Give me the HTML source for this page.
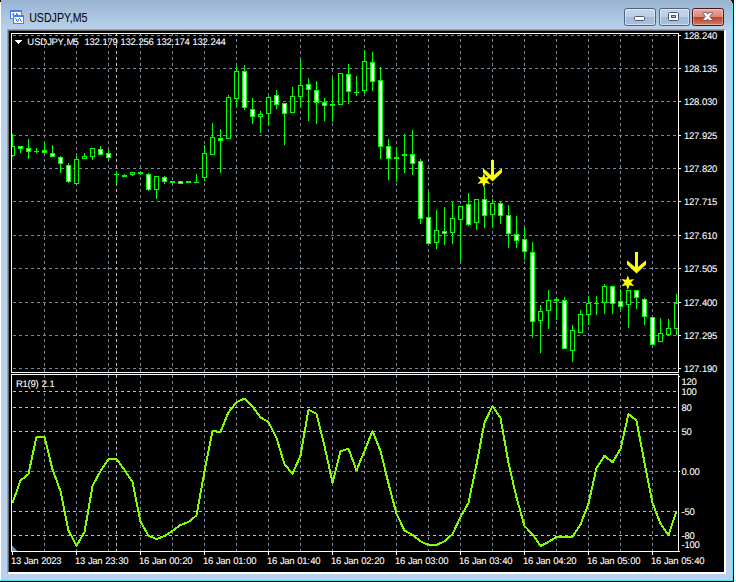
<!DOCTYPE html>
<html><head><meta charset="utf-8"><title>USDJPY,M5</title>
<style>
html,body{margin:0;padding:0;background:#fff;}
body{width:736px;height:582px;position:relative;overflow:hidden;font-family:"Liberation Sans",sans-serif;}
#win{position:absolute;left:0;top:0;width:734px;height:582px;background:#000;}
#frame{position:absolute;left:1px;top:0;width:731px;height:580px;background:linear-gradient(to bottom,#99b4d1 0px,#b9d1ea 29px,#b9d1ea 100%);}
#lwhite{position:absolute;left:0;top:2px;width:1px;height:578px;background:#fff;}
#cyr{position:absolute;left:732px;top:3px;width:1px;height:578px;background:#4fe0fb;}
#cyb{position:absolute;left:0;top:580px;width:733px;height:1px;background:#4fe0fb;}
#client{position:absolute;left:7px;top:29px;width:715px;height:541px;background:#000;border-style:solid;border-width:2px;border-color:#a0a0a0 #fff #fff #a0a0a0;}
#client:before{content:"";position:absolute;left:-1px;top:-1px;right:0;bottom:0;border-left:1px solid #696969;border-top:1px solid #696969;}
#title{position:absolute;left:29px;top:9px;font-size:12px;line-height:16px;color:#000;letter-spacing:-1px;white-space:nowrap;}
.btn{position:absolute;top:8px;width:29px;height:16px;border:1px solid #53637f;border-radius:2.5px;background:linear-gradient(to bottom,#c3d6ec 0,#bccfe8 48%,#a3bbdb 52%,#a9c1e0 100%);box-shadow:inset 0 0 0 1px rgba(255,255,255,.45);}
#bclose{border-color:#431422;background:linear-gradient(to bottom,#e9a99a 0,#dc8878 48%,#c1401f 52%,#d37c66 100%);box-shadow:inset 0 0 0 1px rgba(255,255,255,.35);}
svg{position:absolute;left:0;top:0;}
</style></head><body>
<div id="win"></div>
<div id="frame"></div>
<div id="lwhite"></div><div id="cyr"></div><div id="cyb"></div>
<div class="btn" style="left:624px;width:30px"></div>
<div class="btn" style="left:659px"></div>
<div class="btn" id="bclose" style="left:692px;width:30px"></div>
<div id="client"></div>
<svg width="736" height="582" viewBox="0 0 736 582" shape-rendering="crispEdges">
<rect x="732" y="0" width="1" height="2" fill="#000"/><rect x="731" y="0" width="1" height="1" fill="#1a2430"/>
<!-- title icon -->
<g>
<rect x="10" y="10" width="12" height="9" fill="#4680f0"/>
<rect x="11" y="12" width="10" height="6" fill="#fff"/>
<path d="M12 14h1v-1h1v2h-2zM16 13h1v1h1v1h-1v1h-1z" fill="#4680f0"/>
<rect x="13" y="15" width="11" height="9" fill="#4680f0"/>
<rect x="14" y="17" width="9" height="6" fill="#fff"/>
<path d="M15 18h1v1h-1zM16 19h1v2h-1zM17 21h1v1h-1zM18 19h1v2h-1zM19 18h1v1h-1zM20 19h1v2h-1zM21 21h1v1h-1z" fill="#4680f0"/>
</g>
<!-- button glyphs -->
<rect x="634.5" y="16.5" width="10" height="4" rx="1" fill="#fff" stroke="#4b546e" shape-rendering="auto"/>
<rect x="668.5" y="12.5" width="10" height="8" rx="1" fill="#fff" stroke="#4b546e" shape-rendering="auto"/>
<rect x="671.5" y="15.5" width="4" height="2" fill="#9fb5d6" stroke="#4b546e" shape-rendering="auto"/>
<polygon points="703.00,13.10 706.30,13.10 707.60,14.64 708.90,13.10 712.20,13.10 709.25,16.60 712.20,20.10 708.90,20.10 707.60,18.56 706.30,20.10 703.00,20.10 705.95,16.60" fill="#fff" stroke="#6b5a66" stroke-width="1.5" stroke-linejoin="round" paint-order="stroke" shape-rendering="geometricPrecision"/>
<defs><clipPath id="c34"><rect x="12" y="34" width="666" height="338"/></clipPath><clipPath id="c375"><rect x="12" y="375" width="666" height="176"/></clipPath><clipPath id="cm"><rect x="12" y="34" width="666" height="338"/></clipPath></defs>
<path d="M13 35.5H678" stroke="#778899" stroke-width="1" stroke-dasharray="3 3" fill="none"/>
<path d="M13 68.5H678" stroke="#778899" stroke-width="1" stroke-dasharray="3 3" fill="none"/>
<path d="M13 101.5H678" stroke="#778899" stroke-width="1" stroke-dasharray="3 3" fill="none"/>
<path d="M13 135.5H678" stroke="#778899" stroke-width="1" stroke-dasharray="3 3" fill="none"/>
<path d="M13 168.5H678" stroke="#778899" stroke-width="1" stroke-dasharray="3 3" fill="none"/>
<path d="M13 201.5H678" stroke="#778899" stroke-width="1" stroke-dasharray="3 3" fill="none"/>
<path d="M13 235.5H678" stroke="#778899" stroke-width="1" stroke-dasharray="3 3" fill="none"/>
<path d="M13 268.5H678" stroke="#778899" stroke-width="1" stroke-dasharray="3 3" fill="none"/>
<path d="M13 302.5H678" stroke="#778899" stroke-width="1" stroke-dasharray="3 3" fill="none"/>
<path d="M13 335.5H678" stroke="#778899" stroke-width="1" stroke-dasharray="3 3" fill="none"/>
<path d="M13 368.5H678" stroke="#778899" stroke-width="1" stroke-dasharray="3 3" fill="none"/>
<path d="M44.5 33V372" stroke="#778899" stroke-width="1" stroke-dasharray="3 3" fill="none" clip-path="url(#c34)"/>
<path d="M44.5 375V551" stroke="#778899" stroke-width="1" stroke-dasharray="3 3" fill="none" clip-path="url(#c375)"/>
<path d="M76.5 33V372" stroke="#778899" stroke-width="1" stroke-dasharray="3 3" fill="none" clip-path="url(#c34)"/>
<path d="M76.5 375V551" stroke="#778899" stroke-width="1" stroke-dasharray="3 3" fill="none" clip-path="url(#c375)"/>
<path d="M108.5 33V372" stroke="#778899" stroke-width="1" stroke-dasharray="3 3" fill="none" clip-path="url(#c34)"/>
<path d="M108.5 375V551" stroke="#778899" stroke-width="1" stroke-dasharray="3 3" fill="none" clip-path="url(#c375)"/>
<path d="M140.5 33V372" stroke="#778899" stroke-width="1" stroke-dasharray="3 3" fill="none" clip-path="url(#c34)"/>
<path d="M140.5 375V551" stroke="#778899" stroke-width="1" stroke-dasharray="3 3" fill="none" clip-path="url(#c375)"/>
<path d="M172.5 33V372" stroke="#778899" stroke-width="1" stroke-dasharray="3 3" fill="none" clip-path="url(#c34)"/>
<path d="M172.5 375V551" stroke="#778899" stroke-width="1" stroke-dasharray="3 3" fill="none" clip-path="url(#c375)"/>
<path d="M204.5 33V372" stroke="#778899" stroke-width="1" stroke-dasharray="3 3" fill="none" clip-path="url(#c34)"/>
<path d="M204.5 375V551" stroke="#778899" stroke-width="1" stroke-dasharray="3 3" fill="none" clip-path="url(#c375)"/>
<path d="M236.5 33V372" stroke="#778899" stroke-width="1" stroke-dasharray="3 3" fill="none" clip-path="url(#c34)"/>
<path d="M236.5 375V551" stroke="#778899" stroke-width="1" stroke-dasharray="3 3" fill="none" clip-path="url(#c375)"/>
<path d="M268.5 33V372" stroke="#778899" stroke-width="1" stroke-dasharray="3 3" fill="none" clip-path="url(#c34)"/>
<path d="M268.5 375V551" stroke="#778899" stroke-width="1" stroke-dasharray="3 3" fill="none" clip-path="url(#c375)"/>
<path d="M300.5 33V372" stroke="#778899" stroke-width="1" stroke-dasharray="3 3" fill="none" clip-path="url(#c34)"/>
<path d="M300.5 375V551" stroke="#778899" stroke-width="1" stroke-dasharray="3 3" fill="none" clip-path="url(#c375)"/>
<path d="M332.5 33V372" stroke="#778899" stroke-width="1" stroke-dasharray="3 3" fill="none" clip-path="url(#c34)"/>
<path d="M332.5 375V551" stroke="#778899" stroke-width="1" stroke-dasharray="3 3" fill="none" clip-path="url(#c375)"/>
<path d="M364.5 33V372" stroke="#778899" stroke-width="1" stroke-dasharray="3 3" fill="none" clip-path="url(#c34)"/>
<path d="M364.5 375V551" stroke="#778899" stroke-width="1" stroke-dasharray="3 3" fill="none" clip-path="url(#c375)"/>
<path d="M396.5 33V372" stroke="#778899" stroke-width="1" stroke-dasharray="3 3" fill="none" clip-path="url(#c34)"/>
<path d="M396.5 375V551" stroke="#778899" stroke-width="1" stroke-dasharray="3 3" fill="none" clip-path="url(#c375)"/>
<path d="M428.5 33V372" stroke="#778899" stroke-width="1" stroke-dasharray="3 3" fill="none" clip-path="url(#c34)"/>
<path d="M428.5 375V551" stroke="#778899" stroke-width="1" stroke-dasharray="3 3" fill="none" clip-path="url(#c375)"/>
<path d="M460.5 33V372" stroke="#778899" stroke-width="1" stroke-dasharray="3 3" fill="none" clip-path="url(#c34)"/>
<path d="M460.5 375V551" stroke="#778899" stroke-width="1" stroke-dasharray="3 3" fill="none" clip-path="url(#c375)"/>
<path d="M492.5 33V372" stroke="#778899" stroke-width="1" stroke-dasharray="3 3" fill="none" clip-path="url(#c34)"/>
<path d="M492.5 375V551" stroke="#778899" stroke-width="1" stroke-dasharray="3 3" fill="none" clip-path="url(#c375)"/>
<path d="M524.5 33V372" stroke="#778899" stroke-width="1" stroke-dasharray="3 3" fill="none" clip-path="url(#c34)"/>
<path d="M524.5 375V551" stroke="#778899" stroke-width="1" stroke-dasharray="3 3" fill="none" clip-path="url(#c375)"/>
<path d="M556.5 33V372" stroke="#778899" stroke-width="1" stroke-dasharray="3 3" fill="none" clip-path="url(#c34)"/>
<path d="M556.5 375V551" stroke="#778899" stroke-width="1" stroke-dasharray="3 3" fill="none" clip-path="url(#c375)"/>
<path d="M588.5 33V372" stroke="#778899" stroke-width="1" stroke-dasharray="3 3" fill="none" clip-path="url(#c34)"/>
<path d="M588.5 375V551" stroke="#778899" stroke-width="1" stroke-dasharray="3 3" fill="none" clip-path="url(#c375)"/>
<path d="M620.5 33V372" stroke="#778899" stroke-width="1" stroke-dasharray="3 3" fill="none" clip-path="url(#c34)"/>
<path d="M620.5 375V551" stroke="#778899" stroke-width="1" stroke-dasharray="3 3" fill="none" clip-path="url(#c375)"/>
<path d="M652.5 33V372" stroke="#778899" stroke-width="1" stroke-dasharray="3 3" fill="none" clip-path="url(#c34)"/>
<path d="M652.5 375V551" stroke="#778899" stroke-width="1" stroke-dasharray="3 3" fill="none" clip-path="url(#c375)"/>
<path d="M116.5 33V372" stroke="#c0c0c0" stroke-width="1" stroke-dasharray="3 3" fill="none" clip-path="url(#c34)"/>
<path d="M116.5 375V551" stroke="#c0c0c0" stroke-width="1" stroke-dasharray="3 3" fill="none" clip-path="url(#c375)"/>
<path d="M13 391.5H678" stroke="#c0c0c0" stroke-width="1" stroke-dasharray="3 3" fill="none"/>
<path d="M13 407.5H678" stroke="#c0c0c0" stroke-width="1" stroke-dasharray="3 3" fill="none"/>
<path d="M13 431.5H678" stroke="#c0c0c0" stroke-width="1" stroke-dasharray="3 3" fill="none"/>
<path d="M13 471.5H678" stroke="#778899" stroke-width="1" stroke-dasharray="3 3" fill="none"/>
<path d="M13 511.5H678" stroke="#c0c0c0" stroke-width="1" stroke-dasharray="3 3" fill="none"/>
<path d="M13 535.5H678" stroke="#c0c0c0" stroke-width="1" stroke-dasharray="3 3" fill="none"/>
<rect x="11" y="33" width="668" height="1" fill="#fff"/>
<rect x="11" y="372" width="668" height="1" fill="#fff"/>
<rect x="11" y="33" width="1" height="340" fill="#fff"/>
<rect x="678" y="33" width="1" height="340" fill="#fff"/>
<rect x="11" y="374" width="668" height="1" fill="#fff"/>
<rect x="11" y="551" width="668" height="1" fill="#fff"/>
<rect x="11" y="374" width="1" height="178" fill="#fff"/>
<rect x="678" y="374" width="1" height="178" fill="#fff"/>
<rect x="679" y="35" width="2" height="1" fill="#fff"/>
<rect x="679" y="68" width="2" height="1" fill="#fff"/>
<rect x="679" y="101" width="2" height="1" fill="#fff"/>
<rect x="679" y="135" width="2" height="1" fill="#fff"/>
<rect x="679" y="168" width="2" height="1" fill="#fff"/>
<rect x="679" y="201" width="2" height="1" fill="#fff"/>
<rect x="679" y="235" width="2" height="1" fill="#fff"/>
<rect x="679" y="268" width="2" height="1" fill="#fff"/>
<rect x="679" y="302" width="2" height="1" fill="#fff"/>
<rect x="679" y="335" width="2" height="1" fill="#fff"/>
<rect x="679" y="368" width="2" height="1" fill="#fff"/>
<rect x="679" y="471" width="1" height="1" fill="#fff"/>
<rect x="679" y="551" width="1" height="1" fill="#fff"/>
<rect x="679" y="376" width="1" height="1" fill="#fff"/>
<rect x="12" y="552" width="1" height="3" fill="#fff"/>
<rect x="76" y="552" width="1" height="3" fill="#fff"/>
<rect x="140" y="552" width="1" height="3" fill="#fff"/>
<rect x="204" y="552" width="1" height="3" fill="#fff"/>
<rect x="268" y="552" width="1" height="3" fill="#fff"/>
<rect x="332" y="552" width="1" height="3" fill="#fff"/>
<rect x="396" y="552" width="1" height="3" fill="#fff"/>
<rect x="460" y="552" width="1" height="3" fill="#fff"/>
<rect x="524" y="552" width="1" height="3" fill="#fff"/>
<rect x="588" y="552" width="1" height="3" fill="#fff"/>
<rect x="652" y="552" width="1" height="3" fill="#fff"/>
<path d="M12 546L17 551H12Z" fill="#778899"/>
<g clip-path="url(#cm)" shape-rendering="crispEdges">
<rect x="12" y="134" width="1" height="23" fill="#00ff00"/>
<rect x="10" y="146" width="5" height="10" fill="#00ff00"/>
<rect x="11" y="147" width="3" height="8" fill="#000"/>
<rect x="20" y="147" width="1" height="6" fill="#00ff00"/>
<rect x="18" y="146" width="5" height="3" fill="#00ff00"/>
<rect x="19" y="147" width="3" height="1" fill="#fff"/>
<rect x="28" y="139" width="1" height="20" fill="#00ff00"/>
<rect x="26" y="148" width="5" height="4" fill="#00ff00"/>
<rect x="27" y="149" width="3" height="2" fill="#fff"/>
<rect x="36" y="148" width="1" height="5" fill="#00ff00"/>
<rect x="34" y="151" width="5" height="1" fill="#00ff00"/>
<rect x="44" y="142" width="1" height="12" fill="#00ff00"/>
<rect x="42" y="150" width="5" height="3" fill="#00ff00"/>
<rect x="43" y="151" width="3" height="1" fill="#fff"/>
<rect x="52" y="145" width="1" height="12" fill="#00ff00"/>
<rect x="50" y="153" width="5" height="4" fill="#00ff00"/>
<rect x="51" y="154" width="3" height="2" fill="#fff"/>
<rect x="60" y="156" width="1" height="17" fill="#00ff00"/>
<rect x="58" y="157" width="5" height="7" fill="#00ff00"/>
<rect x="59" y="158" width="3" height="5" fill="#fff"/>
<rect x="68" y="163" width="1" height="20" fill="#00ff00"/>
<rect x="66" y="165" width="5" height="17" fill="#00ff00"/>
<rect x="67" y="166" width="3" height="15" fill="#fff"/>
<rect x="76" y="156" width="1" height="28" fill="#00ff00"/>
<rect x="74" y="159" width="5" height="25" fill="#00ff00"/>
<rect x="75" y="160" width="3" height="23" fill="#000"/>
<rect x="84" y="153" width="1" height="6" fill="#00ff00"/>
<rect x="82" y="156" width="5" height="3" fill="#00ff00"/>
<rect x="83" y="157" width="3" height="1" fill="#000"/>
<rect x="92" y="148" width="1" height="12" fill="#00ff00"/>
<rect x="90" y="148" width="5" height="9" fill="#00ff00"/>
<rect x="91" y="149" width="3" height="7" fill="#000"/>
<rect x="100" y="146" width="1" height="9" fill="#00ff00"/>
<rect x="98" y="149" width="5" height="6" fill="#00ff00"/>
<rect x="99" y="150" width="3" height="4" fill="#fff"/>
<rect x="108" y="149" width="1" height="10" fill="#00ff00"/>
<rect x="106" y="153" width="5" height="5" fill="#00ff00"/>
<rect x="107" y="154" width="3" height="3" fill="#fff"/>
<rect x="116" y="171" width="1" height="12" fill="#00ff00"/>
<rect x="114" y="174" width="5" height="1" fill="#00ff00"/>
<rect x="124" y="174" width="1" height="3" fill="#00ff00"/>
<rect x="122" y="175" width="5" height="2" fill="#00ff00"/>
<rect x="132" y="172" width="1" height="4" fill="#00ff00"/>
<rect x="130" y="172" width="5" height="3" fill="#00ff00"/>
<rect x="131" y="173" width="3" height="1" fill="#000"/>
<rect x="140" y="171" width="1" height="4" fill="#00ff00"/>
<rect x="138" y="172" width="5" height="2" fill="#00ff00"/>
<rect x="148" y="173" width="1" height="18" fill="#00ff00"/>
<rect x="146" y="174" width="5" height="16" fill="#00ff00"/>
<rect x="147" y="175" width="3" height="14" fill="#fff"/>
<rect x="156" y="176" width="1" height="23" fill="#00ff00"/>
<rect x="154" y="176" width="5" height="14" fill="#00ff00"/>
<rect x="155" y="177" width="3" height="12" fill="#000"/>
<rect x="164" y="176" width="1" height="8" fill="#00ff00"/>
<rect x="162" y="177" width="5" height="5" fill="#00ff00"/>
<rect x="163" y="178" width="3" height="3" fill="#fff"/>
<rect x="172" y="181" width="1" height="2" fill="#00ff00"/>
<rect x="170" y="181" width="5" height="2" fill="#00ff00"/>
<rect x="180" y="181" width="1" height="3" fill="#00ff00"/>
<rect x="178" y="181" width="5" height="3" fill="#00ff00"/>
<rect x="179" y="182" width="3" height="1" fill="#fff"/>
<rect x="188" y="181" width="1" height="2" fill="#00ff00"/>
<rect x="186" y="181" width="5" height="2" fill="#00ff00"/>
<rect x="196" y="174" width="1" height="9" fill="#00ff00"/>
<rect x="194" y="182" width="5" height="1" fill="#00ff00"/>
<rect x="204" y="145" width="1" height="36" fill="#00ff00"/>
<rect x="202" y="153" width="5" height="25" fill="#00ff00"/>
<rect x="203" y="154" width="3" height="23" fill="#000"/>
<rect x="212" y="123" width="1" height="32" fill="#00ff00"/>
<rect x="210" y="137" width="5" height="18" fill="#00ff00"/>
<rect x="211" y="138" width="3" height="16" fill="#000"/>
<rect x="220" y="129" width="1" height="44" fill="#00ff00"/>
<rect x="218" y="138" width="5" height="3" fill="#00ff00"/>
<rect x="219" y="139" width="3" height="1" fill="#fff"/>
<rect x="228" y="95" width="1" height="44" fill="#00ff00"/>
<rect x="226" y="97" width="5" height="42" fill="#00ff00"/>
<rect x="227" y="98" width="3" height="40" fill="#000"/>
<rect x="236" y="65" width="1" height="42" fill="#00ff00"/>
<rect x="234" y="71" width="5" height="28" fill="#00ff00"/>
<rect x="235" y="72" width="3" height="26" fill="#000"/>
<rect x="244" y="65" width="1" height="45" fill="#00ff00"/>
<rect x="242" y="71" width="5" height="37" fill="#00ff00"/>
<rect x="243" y="72" width="3" height="35" fill="#fff"/>
<rect x="252" y="98" width="1" height="26" fill="#00ff00"/>
<rect x="250" y="109" width="5" height="8" fill="#00ff00"/>
<rect x="251" y="110" width="3" height="6" fill="#fff"/>
<rect x="260" y="111" width="1" height="22" fill="#00ff00"/>
<rect x="258" y="114" width="5" height="3" fill="#00ff00"/>
<rect x="259" y="115" width="3" height="1" fill="#000"/>
<rect x="268" y="96" width="1" height="29" fill="#00ff00"/>
<rect x="266" y="97" width="5" height="17" fill="#00ff00"/>
<rect x="267" y="98" width="3" height="15" fill="#000"/>
<rect x="276" y="90" width="1" height="19" fill="#00ff00"/>
<rect x="274" y="95" width="5" height="10" fill="#00ff00"/>
<rect x="275" y="96" width="3" height="8" fill="#fff"/>
<rect x="284" y="103" width="1" height="42" fill="#00ff00"/>
<rect x="282" y="103" width="5" height="11" fill="#00ff00"/>
<rect x="283" y="104" width="3" height="9" fill="#fff"/>
<rect x="292" y="87" width="1" height="26" fill="#00ff00"/>
<rect x="290" y="96" width="5" height="17" fill="#00ff00"/>
<rect x="291" y="97" width="3" height="15" fill="#000"/>
<rect x="300" y="60" width="1" height="47" fill="#00ff00"/>
<rect x="298" y="85" width="5" height="12" fill="#00ff00"/>
<rect x="299" y="86" width="3" height="10" fill="#000"/>
<rect x="308" y="78" width="1" height="43" fill="#00ff00"/>
<rect x="306" y="84" width="5" height="6" fill="#00ff00"/>
<rect x="307" y="85" width="3" height="4" fill="#fff"/>
<rect x="316" y="81" width="1" height="43" fill="#00ff00"/>
<rect x="314" y="90" width="5" height="13" fill="#00ff00"/>
<rect x="315" y="91" width="3" height="11" fill="#fff"/>
<rect x="324" y="98" width="1" height="23" fill="#00ff00"/>
<rect x="322" y="102" width="5" height="4" fill="#00ff00"/>
<rect x="323" y="103" width="3" height="2" fill="#fff"/>
<rect x="332" y="78" width="1" height="44" fill="#00ff00"/>
<rect x="330" y="104" width="5" height="2" fill="#00ff00"/>
<rect x="340" y="73" width="1" height="32" fill="#00ff00"/>
<rect x="338" y="73" width="5" height="32" fill="#00ff00"/>
<rect x="339" y="74" width="3" height="30" fill="#000"/>
<rect x="348" y="64" width="1" height="40" fill="#00ff00"/>
<rect x="346" y="74" width="5" height="18" fill="#00ff00"/>
<rect x="347" y="75" width="3" height="16" fill="#fff"/>
<rect x="356" y="76" width="1" height="20" fill="#00ff00"/>
<rect x="354" y="92" width="5" height="1" fill="#00ff00"/>
<rect x="364" y="50" width="1" height="43" fill="#00ff00"/>
<rect x="362" y="61" width="5" height="30" fill="#00ff00"/>
<rect x="363" y="62" width="3" height="28" fill="#000"/>
<rect x="372" y="52" width="1" height="39" fill="#00ff00"/>
<rect x="370" y="62" width="5" height="20" fill="#00ff00"/>
<rect x="371" y="63" width="3" height="18" fill="#fff"/>
<rect x="380" y="67" width="1" height="92" fill="#00ff00"/>
<rect x="378" y="80" width="5" height="67" fill="#00ff00"/>
<rect x="379" y="81" width="3" height="65" fill="#fff"/>
<rect x="388" y="139" width="1" height="41" fill="#00ff00"/>
<rect x="386" y="146" width="5" height="13" fill="#00ff00"/>
<rect x="387" y="147" width="3" height="11" fill="#fff"/>
<rect x="396" y="148" width="1" height="34" fill="#00ff00"/>
<rect x="394" y="157" width="5" height="2" fill="#00ff00"/>
<rect x="404" y="134" width="1" height="39" fill="#00ff00"/>
<rect x="402" y="154" width="5" height="2" fill="#00ff00"/>
<rect x="412" y="130" width="1" height="45" fill="#00ff00"/>
<rect x="410" y="154" width="5" height="10" fill="#00ff00"/>
<rect x="411" y="155" width="3" height="8" fill="#fff"/>
<rect x="420" y="159" width="1" height="65" fill="#00ff00"/>
<rect x="418" y="161" width="5" height="58" fill="#00ff00"/>
<rect x="419" y="162" width="3" height="56" fill="#fff"/>
<rect x="428" y="192" width="1" height="52" fill="#00ff00"/>
<rect x="426" y="217" width="5" height="27" fill="#00ff00"/>
<rect x="427" y="218" width="3" height="25" fill="#fff"/>
<rect x="436" y="210" width="1" height="39" fill="#00ff00"/>
<rect x="434" y="230" width="5" height="13" fill="#00ff00"/>
<rect x="435" y="231" width="3" height="11" fill="#000"/>
<rect x="444" y="207" width="1" height="38" fill="#00ff00"/>
<rect x="442" y="231" width="5" height="3" fill="#00ff00"/>
<rect x="443" y="232" width="3" height="1" fill="#fff"/>
<rect x="452" y="202" width="1" height="42" fill="#00ff00"/>
<rect x="450" y="218" width="5" height="15" fill="#00ff00"/>
<rect x="451" y="219" width="3" height="13" fill="#000"/>
<rect x="460" y="206" width="1" height="56" fill="#00ff00"/>
<rect x="458" y="206" width="5" height="14" fill="#00ff00"/>
<rect x="459" y="207" width="3" height="12" fill="#000"/>
<rect x="468" y="193" width="1" height="33" fill="#00ff00"/>
<rect x="466" y="204" width="5" height="21" fill="#00ff00"/>
<rect x="467" y="205" width="3" height="19" fill="#fff"/>
<rect x="476" y="199" width="1" height="31" fill="#00ff00"/>
<rect x="474" y="199" width="5" height="24" fill="#00ff00"/>
<rect x="475" y="200" width="3" height="22" fill="#000"/>
<rect x="484" y="187" width="1" height="41" fill="#00ff00"/>
<rect x="482" y="199" width="5" height="17" fill="#00ff00"/>
<rect x="483" y="200" width="3" height="15" fill="#fff"/>
<rect x="492" y="199" width="1" height="29" fill="#00ff00"/>
<rect x="490" y="203" width="5" height="12" fill="#00ff00"/>
<rect x="491" y="204" width="3" height="10" fill="#000"/>
<rect x="500" y="202" width="1" height="22" fill="#00ff00"/>
<rect x="498" y="203" width="5" height="13" fill="#00ff00"/>
<rect x="499" y="204" width="3" height="11" fill="#fff"/>
<rect x="508" y="205" width="1" height="43" fill="#00ff00"/>
<rect x="506" y="215" width="5" height="19" fill="#00ff00"/>
<rect x="507" y="216" width="3" height="17" fill="#fff"/>
<rect x="516" y="216" width="1" height="32" fill="#00ff00"/>
<rect x="514" y="234" width="5" height="7" fill="#00ff00"/>
<rect x="515" y="235" width="3" height="5" fill="#fff"/>
<rect x="524" y="228" width="1" height="32" fill="#00ff00"/>
<rect x="522" y="239" width="5" height="13" fill="#00ff00"/>
<rect x="523" y="240" width="3" height="11" fill="#fff"/>
<rect x="532" y="242" width="1" height="96" fill="#00ff00"/>
<rect x="530" y="252" width="5" height="70" fill="#00ff00"/>
<rect x="531" y="253" width="3" height="68" fill="#fff"/>
<rect x="540" y="305" width="1" height="48" fill="#00ff00"/>
<rect x="538" y="311" width="5" height="10" fill="#00ff00"/>
<rect x="539" y="312" width="3" height="8" fill="#000"/>
<rect x="548" y="290" width="1" height="39" fill="#00ff00"/>
<rect x="546" y="300" width="5" height="11" fill="#00ff00"/>
<rect x="547" y="301" width="3" height="9" fill="#000"/>
<rect x="556" y="297" width="1" height="23" fill="#00ff00"/>
<rect x="554" y="299" width="5" height="2" fill="#00ff00"/>
<rect x="564" y="297" width="1" height="52" fill="#00ff00"/>
<rect x="562" y="300" width="5" height="49" fill="#00ff00"/>
<rect x="563" y="301" width="3" height="47" fill="#fff"/>
<rect x="572" y="325" width="1" height="37" fill="#00ff00"/>
<rect x="570" y="330" width="5" height="21" fill="#00ff00"/>
<rect x="571" y="331" width="3" height="19" fill="#000"/>
<rect x="580" y="310" width="1" height="23" fill="#00ff00"/>
<rect x="578" y="314" width="5" height="19" fill="#00ff00"/>
<rect x="579" y="315" width="3" height="17" fill="#000"/>
<rect x="588" y="296" width="1" height="29" fill="#00ff00"/>
<rect x="586" y="303" width="5" height="12" fill="#00ff00"/>
<rect x="587" y="304" width="3" height="10" fill="#000"/>
<rect x="596" y="296" width="1" height="19" fill="#00ff00"/>
<rect x="594" y="303" width="5" height="1" fill="#00ff00"/>
<rect x="604" y="284" width="1" height="30" fill="#00ff00"/>
<rect x="602" y="286" width="5" height="17" fill="#00ff00"/>
<rect x="603" y="287" width="3" height="15" fill="#000"/>
<rect x="612" y="286" width="1" height="28" fill="#00ff00"/>
<rect x="610" y="286" width="5" height="18" fill="#00ff00"/>
<rect x="611" y="287" width="3" height="16" fill="#fff"/>
<rect x="620" y="289" width="1" height="21" fill="#00ff00"/>
<rect x="618" y="301" width="5" height="6" fill="#00ff00"/>
<rect x="619" y="302" width="3" height="4" fill="#fff"/>
<rect x="628" y="290" width="1" height="38" fill="#00ff00"/>
<rect x="626" y="290" width="5" height="15" fill="#00ff00"/>
<rect x="627" y="291" width="3" height="13" fill="#000"/>
<rect x="636" y="290" width="1" height="19" fill="#00ff00"/>
<rect x="634" y="290" width="5" height="8" fill="#00ff00"/>
<rect x="635" y="291" width="3" height="6" fill="#fff"/>
<rect x="644" y="298" width="1" height="27" fill="#00ff00"/>
<rect x="642" y="299" width="5" height="18" fill="#00ff00"/>
<rect x="643" y="300" width="3" height="16" fill="#fff"/>
<rect x="652" y="317" width="1" height="28" fill="#00ff00"/>
<rect x="650" y="317" width="5" height="28" fill="#00ff00"/>
<rect x="651" y="318" width="3" height="26" fill="#fff"/>
<rect x="660" y="318" width="1" height="24" fill="#00ff00"/>
<rect x="658" y="333" width="5" height="9" fill="#00ff00"/>
<rect x="659" y="334" width="3" height="7" fill="#000"/>
<rect x="668" y="319" width="1" height="17" fill="#00ff00"/>
<rect x="666" y="328" width="5" height="7" fill="#00ff00"/>
<rect x="667" y="329" width="3" height="5" fill="#000"/>
<rect x="676" y="294" width="1" height="41" fill="#00ff00"/>
<rect x="674" y="303" width="5" height="26" fill="#00ff00"/>
<rect x="675" y="304" width="3" height="24" fill="#000"/>
</g>
<polyline points="12.5,503 20.5,480.5 28.5,474 36.5,436.7 44.5,436.7 52.5,469.6 60.5,491 68.5,530.5 76.5,545.8 84.5,532 92.5,486 100.5,471 108.5,459 116.5,459 124.5,470 132.5,482 140.5,521.5 148.5,535.8 156.5,539 164.5,536 172.5,531 180.5,525 188.5,522 196.5,515.4 204.5,471.5 212.5,430.8 220.5,432.2 228.5,412.2 236.5,402.2 244.5,398.6 252.5,406.7 260.5,417.5 268.5,422 276.5,437.9 284.5,464.2 292.5,473.8 300.5,455.6 308.5,409.7 316.5,413.8 324.5,446 332.5,482.6 340.5,451.3 348.5,448.7 356.5,470.4 364.5,451 372.5,431 380.5,451 388.5,483.6 396.5,513.9 404.5,530.5 412.5,534.8 420.5,541.3 428.5,545 436.5,545 444.5,541.3 452.5,534.2 460.5,517 468.5,502.8 476.5,464.5 484.5,422.7 492.5,406 500.5,418 508.5,463 516.5,497.5 524.5,526 532.5,534.2 540.5,546 548.5,541.9 556.5,536.8 564.5,536.8 572.5,536.8 580.5,524.6 588.5,503.5 596.5,468 604.5,455.8 612.5,462.3 620.5,449.1 628.5,414 636.5,420.6 644.5,462.7 652.5,503 660.5,523.6 668.5,535.2 676.5,511.3" fill="none" stroke="#7fff00" stroke-width="2" stroke-linejoin="round" clip-path="url(#c375)"/>
<polygon points="483.90,172.90 485.50,177.53 490.31,176.60 487.10,180.30 490.31,184.00 485.50,183.07 483.90,187.70 482.30,183.07 477.49,184.00 480.70,180.30 477.49,176.60 482.30,177.53" fill="#ffff00" shape-rendering="geometricPrecision"/>
<polygon points="491.00,160.00 494.00,160.00 494.00,175.00 502.00,168.30 502.00,172.50 492.50,181.50 483.00,172.50 483.00,168.30 491.00,175.00" fill="#ffff00" shape-rendering="geometricPrecision"/>
<polygon points="627.80,275.20 629.40,279.83 634.21,278.90 631.00,282.60 634.21,286.30 629.40,285.37 627.80,290.00 626.20,285.37 621.39,286.30 624.60,282.60 621.39,278.90 626.20,279.83" fill="#ffff00" shape-rendering="geometricPrecision"/>
<polygon points="635.00,252.00 638.00,252.00 638.00,267.00 646.00,260.30 646.00,264.50 636.50,273.50 627.00,264.50 627.00,260.30 635.00,267.00" fill="#ffff00" shape-rendering="geometricPrecision"/>
<g font-family="'Liberation Sans', sans-serif" font-size="9.5" fill="#fff" stroke="#fff" stroke-width="0.08" shape-rendering="auto" text-rendering="geometricPrecision">
<text x="684.1 689.1 694.1 699.1 702.1 707.1 712.1" y="39">128.240</text>
<text x="684.1 689.1 694.1 699.1 702.1 707.1 712.1" y="72">128.135</text>
<text x="684.1 689.1 694.1 699.1 702.1 707.1 712.1" y="105">128.030</text>
<text x="684.1 689.1 694.1 699.1 702.1 707.1 712.1" y="139">127.925</text>
<text x="684.1 689.1 694.1 699.1 702.1 707.1 712.1" y="172">127.820</text>
<text x="684.1 689.1 694.1 699.1 702.1 707.1 712.1" y="205">127.715</text>
<text x="684.1 689.1 694.1 699.1 702.1 707.1 712.1" y="239">127.610</text>
<text x="684.1 689.1 694.1 699.1 702.1 707.1 712.1" y="272">127.505</text>
<text x="684.1 689.1 694.1 699.1 702.1 707.1 712.1" y="306">127.400</text>
<text x="684.1 689.1 694.1 699.1 702.1 707.1 712.1" y="339">127.295</text>
<text x="684.1 689.1 694.1 699.1 702.1 707.1 712.1" y="372">127.190</text>
<text x="681.4 686.4 691.4" y="385">120</text>
<text x="681.4 686.4 691.4" y="395">100</text>
<text x="681.4 686.4" y="411">80</text>
<text x="681.4 686.4" y="435">50</text>
<text x="681.4 686.4 689.4 694.4" y="475">0.00</text>
<text x="681.4 684.4 689.4" y="515">-50</text>
<text x="681.4 684.4 689.4" y="539">-80</text>
<text x="681.4 684.4 689.4 694.4" y="548">-100</text>
<text x="11 16 21 24 28.3 33.3 38.3 41.3 46.3 51.3 56.3" y="564">13&#160;Jan&#160;2023</text>
<text x="75 80 85 88 92.3 97.3 102.3 105.3 110.3 115.3 118.3 123.3" y="564">13&#160;Jan&#160;23:30</text>
<text x="139 144 149 152 156.3 161.3 166.3 169.3 174.3 179.3 182.3 187.3" y="564">16&#160;Jan&#160;00:20</text>
<text x="203 208 213 216 220.3 225.3 230.3 233.3 238.3 243.3 246.3 251.3" y="564">16&#160;Jan&#160;01:00</text>
<text x="267 272 277 280 284.3 289.3 294.3 297.3 302.3 307.3 310.3 315.3" y="564">16&#160;Jan&#160;01:40</text>
<text x="331 336 341 344 348.3 353.3 358.3 361.3 366.3 371.3 374.3 379.3" y="564">16&#160;Jan&#160;02:20</text>
<text x="395 400 405 408 412.3 417.3 422.3 425.3 430.3 435.3 438.3 443.3" y="564">16&#160;Jan&#160;03:00</text>
<text x="459 464 469 472 476.3 481.3 486.3 489.3 494.3 499.3 502.3 507.3" y="564">16&#160;Jan&#160;03:40</text>
<text x="523 528 533 536 540.3 545.3 550.3 553.3 558.3 563.3 566.3 571.3" y="564">16&#160;Jan&#160;04:20</text>
<text x="587 592 597 600 604.3 609.3 614.3 617.3 622.3 627.3 630.3 635.3" y="564">16&#160;Jan&#160;05:00</text>
<text x="651 656 661 664 668.3 673.3 678.3 681.3 686.3 691.3 694.3 699.3" y="564">16&#160;Jan&#160;05:40</text>
<text x="27.2 34.2 40.2 47.2 51.5 57.5 63.5 66.5 73.5 78.5 81.5 84.5 89.5 94.5 99.5 102.5 107.5 112.5 117.5 120.5 125.5 130.5 135.5 138.5 143.5 148.5 153.5 156.5 161.5 166.5 171.5 174.5 179.5 184.5 189.5 192.5 197.5 202.5 207.5 210.5 215.5 220.5" y="45">USDJPY,M5&#160;&#160;132.179&#160;132.256&#160;132.174&#160;132.244</text>
<text x="16 22.5 27.5 30.5 35.5 38.5 41.5 46.5 49.5" y="387">R1(9)&#160;2.1</text>
</g>
<text font-family="'Liberation Sans', sans-serif" font-size="12" fill="#000" shape-rendering="auto" transform="translate(29.2,22) scale(0.885,1)">USDJPY,M5</text>
<path d="M15 40H22L18.5 44Z" fill="#fff"/>
</svg>
</body></html>
